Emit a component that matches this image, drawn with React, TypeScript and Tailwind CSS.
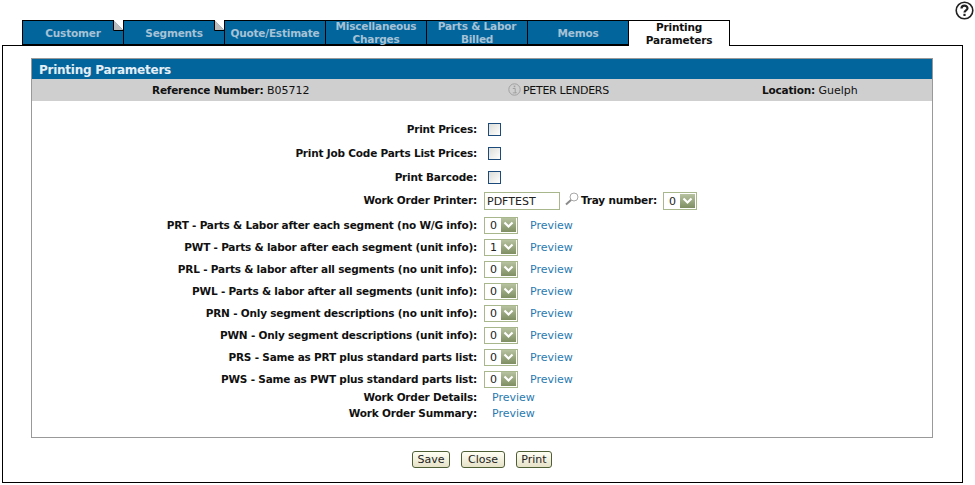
const tabs = [
  { label: "Customer", fold: true, single: true },
  { label: "Segments", fold: true, single: true },
  { label: "Quote/Estimate", single: true },
  { label: "Miscellaneous Charges" },
  { label: "Parts & Labor Billed" },
  { label: "Memos", single: true },
  { label: "Printing Parameters", active: true },
];

const checks = ["Print Prices:", "Print Job Code Parts List Prices:", "Print Barcode:"];

const reports = [
  { label: "PRT - Parts & Labor after each segment (no W/G info):", value: "0" },
  { label: "PWT - Parts & labor after each segment (unit info):", value: "1" },
  { label: "PRL - Parts & labor after all segments (no unit info):", value: "0" },
  { label: "PWL - Parts & labor after all segments (unit info):", value: "0" },
  { label: "PRN - Only segment descriptions (no unit info):", value: "0" },
  { label: "PWN - Only segment descriptions (unit info):", value: "0" },
  { label: "PRS - Same as PRT plus standard parts list:", value: "0" },
  { label: "PWS - Same as PWT plus standard parts list:", value: "0" },
];

const buttons = [
  { label: "Save", w: "w-[38px]" },
  { label: "Close", w: "w-[44px]" },
  { label: "Print", w: "w-[36px]" },
];

const boldText = "text-[10.5px] font-bold tracking-[-0.2px]";

function Dropdown({ value, h = "h-[17px]" }: { value: string; h?: string }) {
  return (
    <div className={`flex w-[34px] items-center justify-between border border-[#a9b78c] bg-white pl-[5px] pr-px text-[11px] text-[#222] ${h}`}>
      <span>{value}</span>
      <span className="flex h-[14px] w-[15px] items-center justify-center bg-gradient-to-b from-[#b7c2a0] to-[#7f8f62]">
        <svg width="11" height="8" viewBox="0 0 11 8">
          <path d="M1.5 1.5 L5.5 5.5 L9.5 1.5" fill="none" stroke="#fff" strokeWidth="2.2" />
        </svg>
      </span>
    </div>
  );
}

function Label({ children }: { children: string }) {
  return <div className={`w-[445px] shrink-0 text-right text-[#111] ${boldText}`}>{children}</div>;
}

function Preview({ className }: { className: string }) {
  return <a className={`text-[#2a7ab0] ${className}`}>Preview</a>;
}

export default function App() {
  return (
    <div className="relative h-[485px] w-[975px] overflow-hidden bg-white font-['DejaVu_Sans',Verdana,sans-serif] text-[11px] leading-[13px]">
      <div className="absolute right-[1px] top-[1px]">
        <svg width="19" height="19" viewBox="0 0 19 19">
          <circle cx="9.5" cy="9.5" r="8.3" fill="#fff" stroke="#222" strokeWidth="1.6" />
          <path d="M6.5 7.5 C6.5 3.8 12.5 3.8 12.5 7.3 C12.5 9.5 9.5 9.3 9.5 11.5" fill="none" stroke="#222" strokeWidth="2.2" />
          <rect x="8.4" y="12.8" width="2.2" height="2.2" fill="#222" />
        </svg>
      </div>

      <div className="flex pl-[22px] pt-5">
        {tabs.map((tab) => (
          <div
            key={tab.label}
            className={`${boldText} ${tab.single ? "pt-[2px]" : ""} ${
              tab.active
                ? "relative z-10 -mb-px flex h-[26px] w-[102px] items-center justify-center border border-b-0 border-black bg-white px-2 text-center text-[#111]"
                : "relative -mr-px flex h-[25px] w-[102px] items-center justify-center border border-black bg-[#02659c] px-1 text-center text-[#a6c2d6]"
            }`}
          >
            {tab.label}
            {tab.fold && (
              <svg className="absolute -right-px -top-px" width="11" height="11" viewBox="0 0 11 11">
                <path d="M0 0 H11 V11 Z" fill="#fff" />
                <path d="M0.5 0 L10.5 10.5 H0.5 Z" fill="#bdbdbd" />
                <path d="M0.5 0 V10.5 H11" fill="none" stroke="#000" />
              </svg>
            )}
          </div>
        ))}
      </div>

      <div className="ml-[2px] flex h-[438px] w-[961px] flex-col items-start border border-black pl-[28px] pt-3">
        <div className="w-[902px] border border-[#999]">
          <div className="flex h-[20px] items-center bg-[#02659c] pl-[7px] pt-[2px] text-[12px] font-bold tracking-[-0.25px] text-[#e4eef5]">
            Printing Parameters
          </div>
          <div className="flex h-[22px] items-center bg-[#cfcfcf] text-[#111]">
            <div className="w-[477px] pl-[120px]">
              <b className={boldText}>Reference Number:</b> B05712
            </div>
            <div className="flex w-[253px] items-center">
              <svg className="ml-[-1px] mr-[2px] mt-[-2px]" width="13" height="13" viewBox="0 0 13 13">
                <circle cx="6.5" cy="6.5" r="5.7" fill="none" stroke="#a0a0a0" />
                <rect x="5.7" y="2.6" width="1.6" height="1.6" fill="#a0a0a0" />
                <path d="M4.8 5.5 H7.2 V9.5 H8.4 M4.8 9.9 H8.4" fill="none" stroke="#a0a0a0" />
              </svg>
              <span className="tracking-[-0.3px]">PETER LENDERS</span>
            </div>
            <div>
              <b className={boldText}>Location:</b> Guelph
            </div>
          </div>

          <div className="flex flex-col pb-4 pt-4">
            {checks.map((label) => (
              <div key={label} className="flex h-6 items-center">
                <Label>{label}</Label>
                <span className="ml-[11px] h-[13px] w-[13px] border border-[#1c4a7a] bg-gradient-to-br from-[#dcdcd8] to-white" />
              </div>
            ))}
            <div className="flex h-[25px] items-start pt-[5px]">
              <Label>Work Order Printer:</Label>
              <div className="ml-[7px] mt-[-2px] flex h-[18px] w-[76px] items-center border border-[#a9b78c] pl-[2px] text-[#222]">
                PDFTEST
              </div>
              <svg className="ml-[4px] mt-[-2px]" width="15" height="14" viewBox="0 0 15 14">
                <circle cx="10" cy="5" r="4" fill="#fff" stroke="#a8a8a8" />
                <path d="M7 8 L2 12.5" stroke="#8a8a8a" strokeWidth="2" />
              </svg>
              <b className={`ml-[2px] mr-[6px] text-[#111] ${boldText}`}>Tray number:</b>
              <div className="mt-[-2px]">
                <Dropdown value="0" h="h-[18px]" />
              </div>
            </div>
            {reports.map((r) => (
              <div key={r.label} className="flex h-[22px] items-center">
                <Label>{r.label}</Label>
                <div className="ml-[7px]">
                  <Dropdown value={r.value} />
                </div>
                <Preview className="ml-[12px]" />
              </div>
            ))}
            <div className="flex h-[15px] items-center">
              <Label>Work Order Details:</Label>
              <Preview className="ml-[15px]" />
            </div>
            <div className="flex h-4 items-center">
              <Label>Work Order Summary:</Label>
              <Preview className="ml-[15px]" />
            </div>
          </div>
        </div>

        <div className="ml-[381px] mt-[13px] flex gap-[11px]">
          {buttons.map((b) => (
            <button
              key={b.label}
              className={`flex h-[17px] items-center justify-center rounded-[3px] border border-[#4f5f35] bg-gradient-to-b from-[#fffff4] to-[#e6e2c8] text-[11px] text-[#222] ${b.w}`}
            >
              {b.label}
            </button>
          ))}
        </div>
      </div>
    </div>
  );
}
